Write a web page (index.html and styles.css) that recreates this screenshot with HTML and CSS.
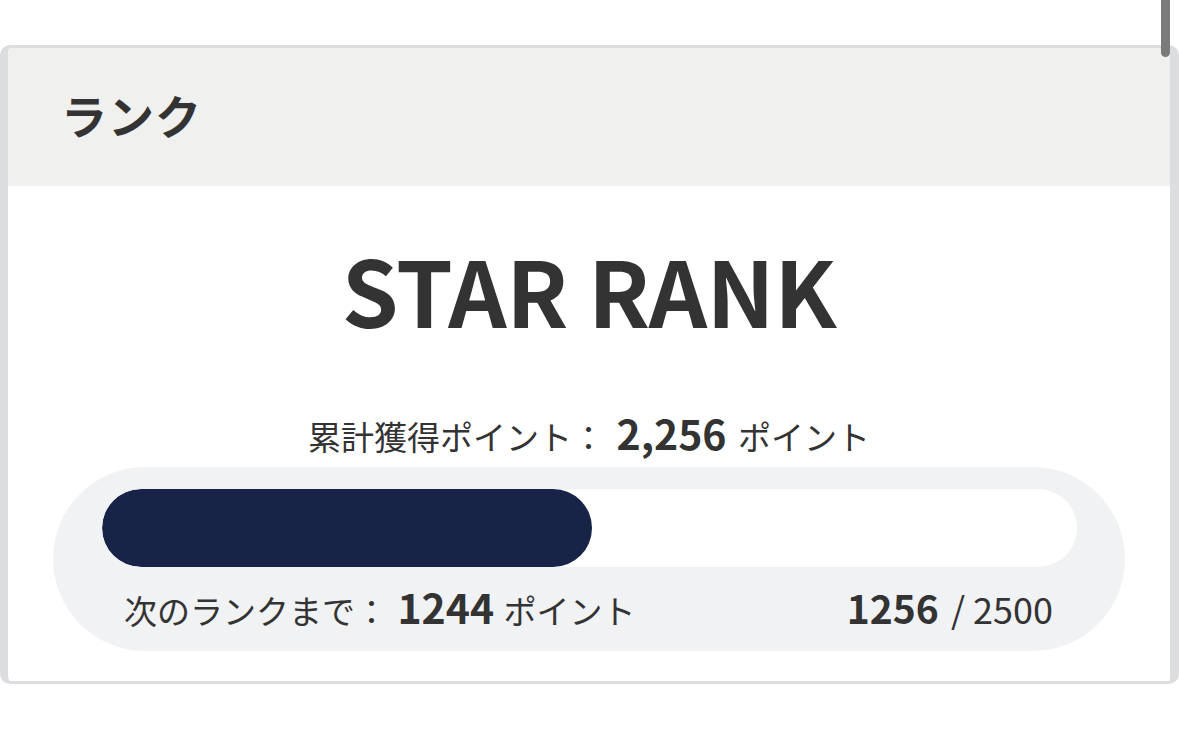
FILE: index.html
```html
<!DOCTYPE html>
<html lang="ja">
<head>
  <meta charset="UTF-8">
  <title>ランク</title>
  <link rel="stylesheet" href="styles.css">
</head>
<body>
  <div class="scrollbar"></div>

  <section class="rank-card">
    <h2 class="rank-head">ランク</h2>

    <div class="rank-body">
      <div class="rank-name">STAR RANK</div>

      <p class="total">累計獲得ポイント： <b>2,256</b> ポイント</p>

      <div class="progress">
        <div class="track">
          <div class="fill" style="width: 50.24%"></div>
        </div>
        <div class="progress-info">
          <span class="next">次のランクまで： <b>1244</b> ポイント</span>
          <span class="count"><b>1256</b> / 2500</span>
        </div>
      </div>
    </div>
  </section>
</body>
</html>
```

FILE: styles.css
```css
body { margin: 0; background: #fff; color: #333; font-family: "Noto Sans CJK JP", "Noto Sans", sans-serif; }
b { font-weight: 700; }

.scrollbar { position: absolute; top: 0; left: 1161px; width: 9px; height: 57px; background: #7b7b7b; border-radius: 0 0 5px 5px; z-index: 2; }

.rank-card { margin-top: 45px; border: solid #dcdddf; border-width: 3px 9px 3px 8px; border-radius: 10px; overflow: hidden; }
.rank-head { margin: 0; height: 138px; box-sizing: border-box; padding: 0 0 6px 53px; display: flex; align-items: center; background: #f0f0ef; font-size: 46px; font-weight: 700; letter-spacing: 1px; }

.rank-body { padding: 48px 45px 30px 45px; text-align: center; }
.rank-name { font-size: 91px; font-weight: 700; line-height: 108px; letter-spacing: -0.5px; }

.total { margin: 66px 0 7px; font-size: 33px; line-height: 48px; }
.total b { font-size: 41px; margin: 0 4px; }

.progress { background: #f1f2f4; border-radius: 92px; padding: 22px 48px 16px 49px; text-align: left; }
.track { height: 78px; background: #fff; border-radius: 39px; overflow: hidden; }
.fill { height: 100%; background: #172448; border-radius: 39px; }

.progress-info { display: flex; justify-content: space-between; align-items: baseline; padding: 14px 24px 0 22px; line-height: 50px; font-size: 33px; }
.progress-info b { font-size: 41px; }
.next b { margin: 0 2px; }
.count { font-size: 36px; }
.count b { font-size: 39px; margin-right: 4px; }
```
